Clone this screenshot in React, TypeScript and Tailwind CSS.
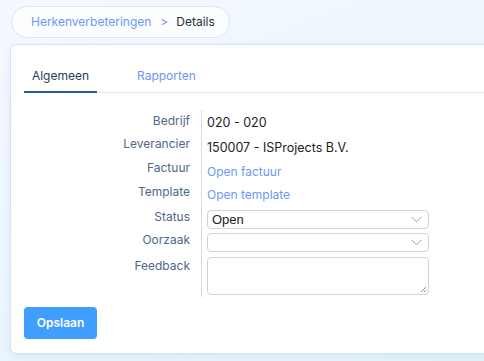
function Chevron() {
  return (
    <svg width="11" height="7" viewBox="0 0 11 7" className="text-[#9aa0a8]">
      <path d="M0.5 0.8 L5.5 5.8 L10.5 0.8" fill="none" stroke="currentColor" strokeWidth="1" />
    </svg>
  );
}

function Row({
  label,
  height,
  labelClass,
  valueClass,
  children,
}: {
  label: string;
  height: string;
  labelClass: string;
  valueClass: string;
  children: React.ReactNode;
}) {
  return (
    <div className={`flex ${height}`}>
      <div
        className={`w-[178px] shrink-0 border-r border-[#d9dde3] pr-[11px] text-right text-[#4f6789] ${labelClass}`}
      >
        {label}
      </div>
      <div className={`pl-[5px] ${valueClass}`}>{children}</div>
    </div>
  );
}

export default function App() {
  return (
    <div className="h-[361px] w-[484px] overflow-hidden bg-[linear-gradient(160deg,#f5f9ff_0%,#eff6fe_35%,#e3f2fa_100%)] font-['Inter',sans-serif] text-[12px]">
      <div className="px-[11px] pt-[6px]">
        <div className="flex h-[32px] w-[219px] items-center rounded-full border border-[#d5e7f8] bg-[#fbfdff] pl-[19px] leading-none">
          <span className="text-[#6b9af3]">Herkenverbeteringen</span>
          <span className="ml-[9px] text-[#6b9af3]">&gt;</span>
          <span className="ml-[8px] text-[#2b2f36]">Details</span>
        </div>
      </div>

      <div className="ml-[10px] mt-[6px] w-[520px] rounded-[6px] border border-[#d2e5f7] bg-white pb-[14px] pl-[13px] pt-[16px] shadow-[0_2px_6px_rgba(120,160,200,0.15)]">
        <div className="flex border-b border-[#e4e7ed]">
          <div className="relative flex h-[31px] w-[73px] items-start justify-center pt-[6px] text-[#2c3e50]">
            Algemeen
            <div className="absolute -bottom-px left-0 h-[2px] w-full bg-[#2d5c9c]" />
          </div>
          <div className="ml-[40px] pt-[6px] text-[#6e97f2]">Rapporten</div>
        </div>

        <div className="mt-[17px] leading-none">
          <Row label="Bedrijf" height="h-[21px]" labelClass="pt-[5px]" valueClass="pt-[7px]">
            <span className="text-[12.5px] text-[#222]">020 - 020</span>
          </Row>
          <Row label="Leverancier" height="h-[25px]" labelClass="pt-[7px]" valueClass="pt-[11px]">
            <span className="text-[12.5px] text-[#222]">150007 - ISProjects B.V.</span>
          </Row>
          <Row label="Factuur" height="h-[24px]" labelClass="pt-[6px]" valueClass="pt-[10px]">
            <span className="text-[#6b9af3]">Open factuur</span>
          </Row>
          <Row label="Template" height="h-[24px]" labelClass="pt-[6px]" valueClass="pt-[9px]">
            <span className="text-[#6b9af3]">Open template</span>
          </Row>
          <Row label="Status" height="h-[25px]" labelClass="pt-[7px]" valueClass="pt-[6px]">
            <div className="flex h-[19px] w-[222px] items-center justify-between rounded-[4px] border border-[#d0d3d8] pl-[4px] pr-[6px] font-['Liberation_Sans',sans-serif] text-[13px] text-[#222]">
              <span>Open</span>
              <Chevron />
            </div>
          </Row>
          <Row label="Oorzaak" height="h-[23px]" labelClass="pt-[5px]" valueClass="pt-[4px]">
            <div className="flex h-[19px] w-[222px] items-center justify-end rounded-[4px] border border-[#d0d3d8] pr-[6px]">
              <Chevron />
            </div>
          </Row>
          <Row label="Feedback" height="h-[45px]" labelClass="pt-[8px]" valueClass="pt-[5px]">
            <div className="relative h-[38px] w-[222px] rounded-[4px] border border-[#d0d3d8]">
              <svg width="7" height="7" viewBox="0 0 7 7" className="absolute bottom-[1px] right-[1px] text-[#777]">
                <path d="M1 6 L6 1 M4 6 L6 4" stroke="currentColor" strokeWidth="0.8" />
              </svg>
            </div>
          </Row>
        </div>

        <button className="mt-[10px] h-[32px] w-[73px] rounded-[4px] bg-[#409eff] font-semibold text-white">
          Opslaan
        </button>
      </div>
    </div>
  );
}
